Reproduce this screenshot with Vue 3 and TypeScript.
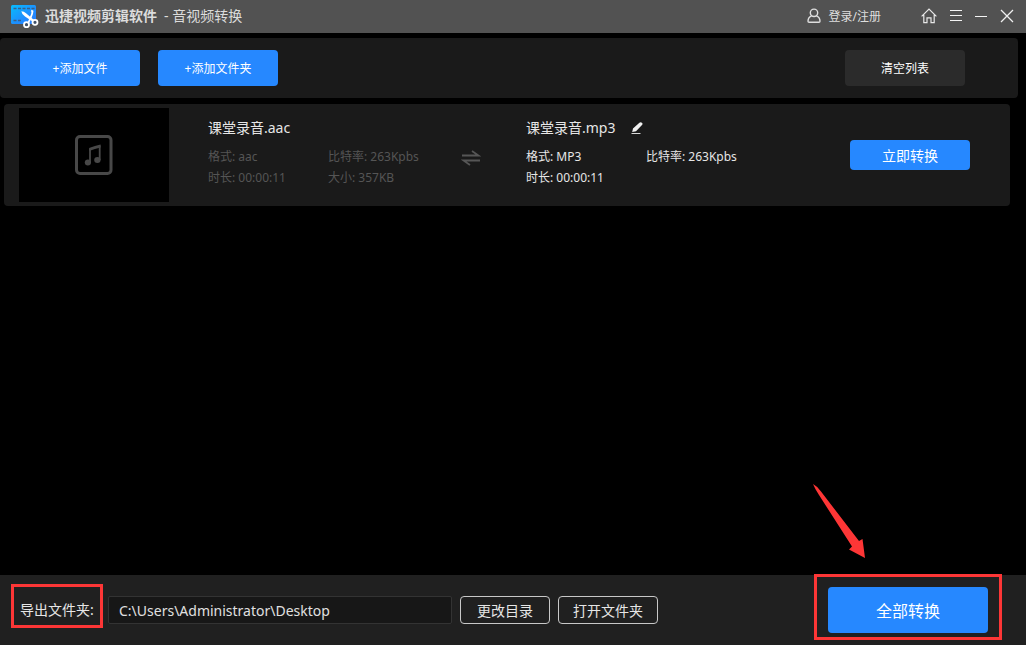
<script setup lang="ts">
import { ref } from 'vue'

interface MediaInfo {
  name: string
  fields: { label: string; value: string }[]
}

interface Task {
  source: MediaInfo
  target: MediaInfo
}

const exportPath = ref<string>('C:\\Users\\Administrator\\Desktop')

const tasks = ref<Task[]>([
  {
    source: {
      name: '课堂录音.aac',
      fields: [
        { label: '格式', value: 'aac' },
        { label: '比特率', value: '263Kpbs' },
        { label: '时长', value: '00:00:11' },
        { label: '大小', value: '357KB' },
      ],
    },
    target: {
      name: '课堂录音.mp3',
      fields: [
        { label: '格式', value: 'MP3' },
        { label: '比特率', value: '263Kpbs' },
        { label: '时长', value: '00:00:11' },
      ],
    },
  },
])
</script>

<template>
  <div class="app">
    <header class="titlebar">
      <svg class="logo" width="28" height="25" viewBox="0 0 28 25" aria-hidden="true">
        <defs>
          <linearGradient id="film" x1="0" y1="0" x2="1" y2="1">
            <stop offset="0" stop-color="#08bdfb" />
            <stop offset="0.6" stop-color="#1e8dff" />
            <stop offset="1" stop-color="#2a7cff" />
          </linearGradient>
        </defs>
        <rect x="0" y="1" width="25" height="19" rx="1.5" fill="url(#film)" />
        <path d="M2.500 4.500H24M2.500 16.500H11" stroke="#3a5f86" stroke-width="1.500" stroke-dasharray="3 1.500" />
        <path d="M10.300 7.300Q13 7.300 15 9.200L23 16 21.500 17.500 14 12.500Q11 11 10.300 7.300z" fill="#fff" />
        <path d="M20.200 6.500 21.500 7.300Q21.500 10 19.500 14L17.300 19" fill="none" stroke="#fff" stroke-width="1.800" />
        <circle cx="15.500" cy="20.700" r="2.500" fill="#3e5068" stroke="#fff" stroke-width="1.800" />
        <circle cx="24" cy="18.300" r="2.500" fill="#3e5068" stroke="#fff" stroke-width="1.800" />
      </svg>
      <h1 class="title"><strong>迅捷视频剪辑软件</strong><span class="sub">- 音视频转换</span></h1>
      <button class="login" type="button">
        <svg width="14" height="16" viewBox="0 0 14 16" fill="none" stroke="#dedede" stroke-width="1.400" aria-hidden="true">
          <circle cx="7" cy="4.800" r="3.700" />
          <path d="M4.600 7.800C2.200 8.800 1 10.900 1 13.200c0 .7.4 1.100 1.100 1.100h9.800c.7 0 1.100-.4 1.100-1.100 0-2.300-1.200-4.400-3.600-5.400" />
        </svg>
        <span>登录/注册</span>
      </button>
      <nav class="window-actions" aria-label="窗口">
        <button type="button" aria-label="主页">
          <svg width="16" height="16" viewBox="0 0 16 16" fill="none" stroke="#e8e8e8" stroke-width="1.200">
            <path d="M.6 8.400 8 1l7.400 7.400M2.800 6.800V14.600H6V9.800h4v4.800h3.200V6.800" />
          </svg>
        </button>
        <button type="button" aria-label="菜单">
          <svg width="12" height="16" viewBox="0 0 12 16" stroke="#f4f4f4"><path d="M0 2.500h12M0 7.500h12M0 12.500h12" /></svg>
        </button>
        <button type="button" aria-label="最小化">
          <svg width="12" height="16" viewBox="0 0 12 16" stroke="#f4f4f4"><path d="M0 8.500h12" /></svg>
        </button>
        <button type="button" aria-label="关闭">
          <svg width="14" height="16" viewBox="0 0 14 16" stroke="#f0f0f0" stroke-width="1.300"><path d="M1 2 13 14M13 2 1 14" /></svg>
        </button>
      </nav>
    </header>

    <section class="toolbar">
      <button class="btn primary add" type="button">+添加文件</button>
      <button class="btn primary add" type="button">+添加文件夹</button>
      <button class="btn clear" type="button">清空列表</button>
    </section>

    <main class="list">
      <article v-for="task in tasks" :key="task.source.name" class="card">
        <div class="thumb">
          <svg width="38" height="40" viewBox="0 0 38 40" aria-hidden="true">
            <rect x="1.500" y="1.500" width="34.500" height="37" rx="3.500" fill="none" stroke="#484848" stroke-width="3" />
            <path d="M15 27.500V14M24.700 25V10.500" fill="none" stroke="#484848" stroke-width="1.800" />
            <path d="M14.100 13Q20 10.500 25.600 9.500V12.500Q20 13.500 14.100 16z" fill="#484848" />
            <ellipse cx="12.900" cy="27.400" rx="3.100" ry="3" fill="#484848" />
            <ellipse cx="22.400" cy="25" rx="3.200" ry="3" fill="#484848" />
          </svg>
        </div>
        <section class="info source">
          <h2>{{ task.source.name }}</h2>
          <ul>
            <li v-for="f in task.source.fields" :key="f.label">{{ f.label }}: {{ f.value }}</li>
          </ul>
        </section>
        <svg class="swap" width="20" height="16" viewBox="0 0 20 16" fill="none" stroke="#565656" stroke-width="1.800" aria-hidden="true">
          <path d="M1 5.500H17.500L11 1M19 10.500H2.500L9 15" />
        </svg>
        <section class="info target">
          <h2>
            <span>{{ task.target.name }}</span>
            <button class="edit" type="button" aria-label="重命名">
              <svg width="12" height="12" viewBox="0 0 12 12">
                <path d="M1.200 10 2 6.500 8.400.7Q9.700-.3 10.900.8T11 3L5 9.200z" fill="#f0f0f0" />
                <path d="M.5 11.500h9" stroke="#d8d8d8" />
              </svg>
            </button>
          </h2>
          <ul>
            <li v-for="f in task.target.fields" :key="f.label">{{ f.label }}: {{ f.value }}</li>
          </ul>
        </section>
        <button class="btn primary convert" type="button">立即转换</button>
      </article>
    </main>

    <footer class="footer">
      <label class="path-label" for="export-path">导出文件夹:<span class="mark" aria-hidden="true"></span></label>
      <input id="export-path" v-model="exportPath" class="path" type="text" spellcheck="false" />
      <button class="btn outline" type="button">更改目录</button>
      <button class="btn outline wide" type="button">打开文件夹</button>
      <div class="convert-all">
        <button class="btn primary all" type="button">全部转换</button>
        <span class="mark" aria-hidden="true"></span>
        <svg class="arrow" width="54" height="76" viewBox="0 0 54 76" aria-hidden="true">
          <path d="M0 0 Q4 2 8 7.500L46 57 49.500 55 52 74 36 65.500 39 62.500 6 11Q2 5 0 0z" fill="#fd3636" />
        </svg>
      </div>
    </footer>
  </div>
</template>

<style>
body {
  margin: 0;
  background: #000;
}
</style>

<style scoped>
.app {
  display: flex;
  flex-direction: column;
  min-height: 100vh;
  background: #000;
  color: #e6e6e6;
  font-family: "Noto Sans", "Noto Sans CJK SC", sans-serif;
  font-size: 12px;
}
.app * {
  box-sizing: border-box;
}
button {
  padding: 0;
  border: 0;
  background: none;
  color: inherit;
  font: inherit;
  cursor: pointer;
}
svg {
  display: block;
  flex: none;
}
h1,
h2,
ul {
  margin: 0;
  padding: 0;
  font-size: 14px;
  font-weight: 400;
  list-style: none;
}
.titlebar {
  display: flex;
  align-items: center;
  height: 33px;
  padding: 0 12px 1px 11px;
  background: #525252;
}
.title {
  display: flex;
  margin-left: 6px;
  line-height: 20px;
  color: #dcdcdc;
  white-space: nowrap;
}
.title strong {
  font-weight: 700;
}
.sub {
  margin-left: 7px;
}
.login {
  display: flex;
  align-items: center;
  gap: 8px;
  margin-left: auto;
  color: #dedede;
}
.window-actions {
  display: flex;
  align-items: center;
  gap: 13px;
  margin-left: 40px;
}
.btn {
  flex: none;
  border-radius: 4px;
  color: #fff;
  white-space: nowrap;
}
.primary {
  background: #2688ff;
}
.toolbar {
  display: flex;
  align-items: center;
  gap: 18px;
  height: 60px;
  margin: 5px 8px 0 0;
  padding: 0 53px 0 20px;
  border-radius: 4px;
  background: #1a1a1a;
}
.add,
.clear {
  width: 120px;
  height: 36px;
}
.clear {
  margin-left: auto;
  background: #2b2b2b;
}
.list {
  flex: 1;
  padding: 6px 16px 6px 4px;
}
.card {
  display: flex;
  align-items: center;
  padding: 4px 40px 4px 15px;
  border-radius: 4px;
  background: #1a1a1a;
}
.thumb {
  display: flex;
  flex: none;
  align-items: center;
  justify-content: center;
  width: 150px;
  height: 94px;
  background: #000;
}
.info {
  align-self: flex-start;
  padding-top: 10px;
}
.info h2 {
  display: flex;
  align-items: center;
  gap: 16px;
  height: 20px;
  line-height: 20px;
}
.info ul {
  display: grid;
  grid-template-columns: 120px 120px;
  margin-top: 8px;
  font-size: 12px;
  line-height: 21px;
}
.source {
  margin-left: 39px;
}
.source ul {
  color: #555;
}
.swap {
  margin: 6px 45px 0 13px;
}
.convert {
  width: 120px;
  height: 30px;
  margin-left: auto;
  font-size: 14px;
}
.footer {
  display: flex;
  align-items: center;
  height: 70px;
  padding: 0 38px 0 20px;
  background: #202020;
  font-size: 14px;
}
.path-label {
  position: relative;
  flex: none;
  width: 88px;
  line-height: 20px;
}
.path {
  flex: 0 1 344px;
  min-width: 0;
  height: 28px;
  margin: 0;
  padding: 0 10px;
  border: 1px solid #333;
  border-radius: 2px;
  outline: none;
  background: #171717;
  color: #e0e0e0;
  font: inherit;
}
.outline {
  width: 90px;
  height: 28px;
  margin-left: 8px;
  border: 1px solid #c8c8c8;
  color: #e6e6e6;
}
.wide {
  width: 100px;
}
.convert-all {
  position: relative;
  margin-left: auto;
}
.all {
  display: block;
  width: 160px;
  height: 46px;
  font-size: 16px;
}
.mark {
  position: absolute;
  border: 3px solid #fd3636;
  pointer-events: none;
}
.path-label .mark {
  inset: -16px 5px -8px -9px;
}
.convert-all .mark {
  inset: -13px -14px -7px -14px;
}
.arrow {
  position: absolute;
  top: -103px;
  left: -15px;
  pointer-events: none;
}
</style>
